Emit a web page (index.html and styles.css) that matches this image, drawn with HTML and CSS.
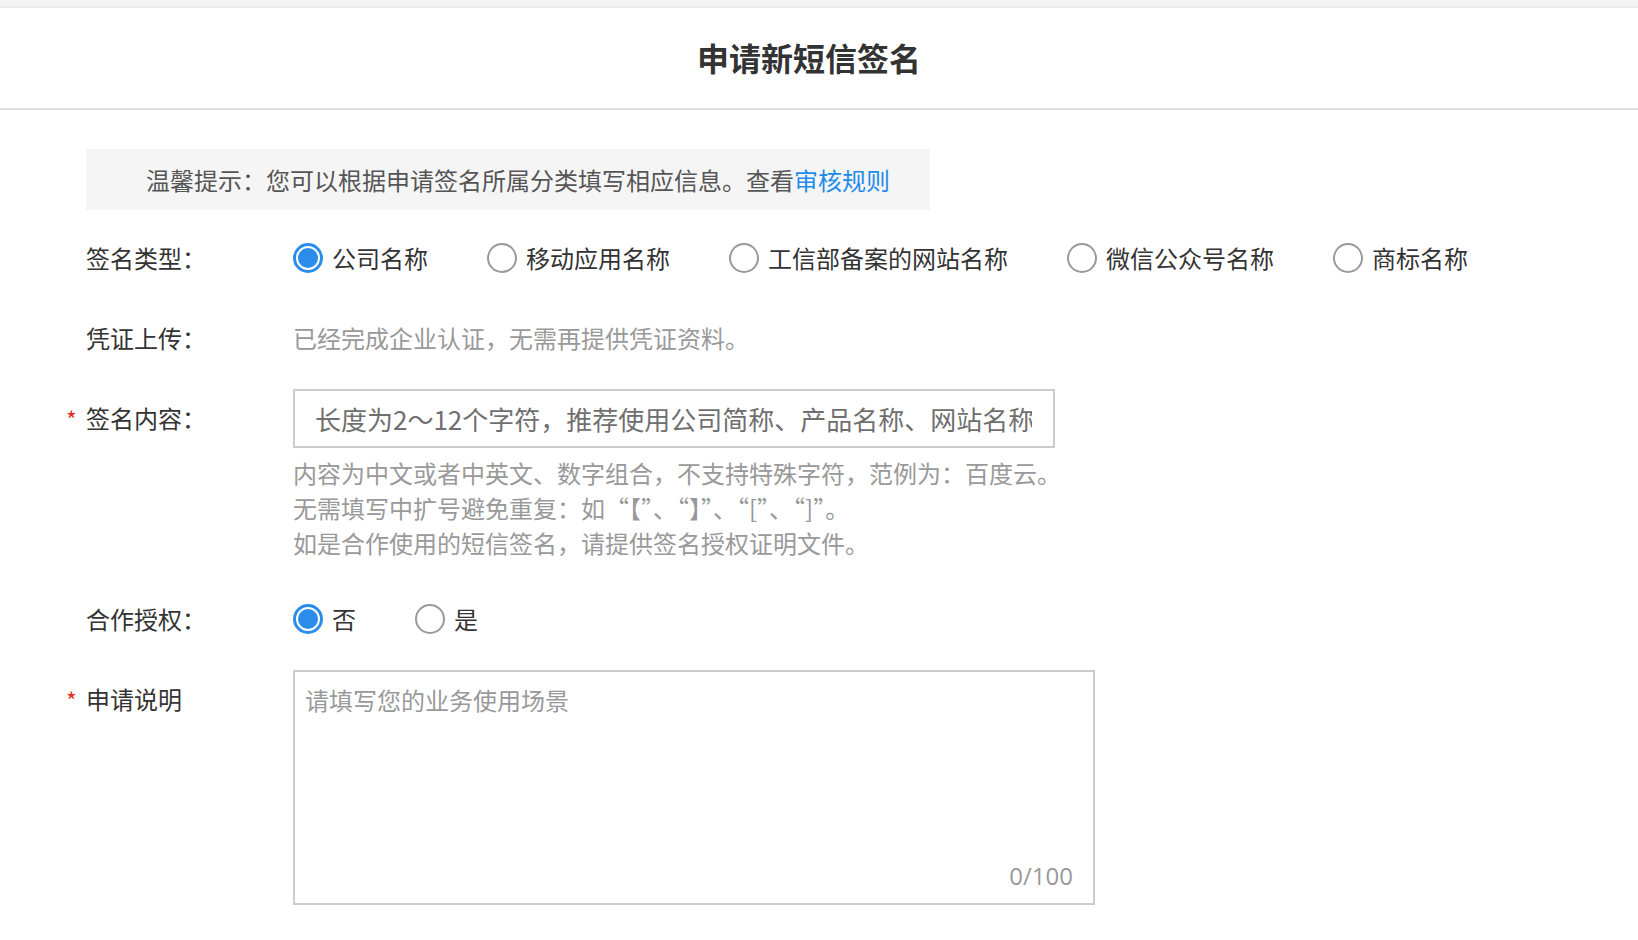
FILE: index.html
```html
<!DOCTYPE html>
<html lang="zh-CN">
<head>
    <meta charset="UTF-8">
    <meta name="viewport" content="width=device-width, initial-scale=1.0">
    <title>申请新短信签名</title>
    <link rel="stylesheet" href="styles.css">
</head>
<body>

    <div class="topbar"></div>

    <!-- 标题 -->
    <div class="header">
        <h1>申请新短信签名</h1>
    </div>

    <div class="form-container">
        <div class="tip">温馨提示：您可以根据申请签名所属分类填写相应信息。查看<a href="#">审核规则</a></div>

        <div class="row row-type">
            <div class="label">签名类型：</div>
            <div class="radios">
                <label class="radio"><input type="radio" name="type" checked><span>公司名称</span></label>
                <label class="radio"><input type="radio" name="type"><span>移动应用名称</span></label>
                <label class="radio"><input type="radio" name="type"><span>工信部备案的网站名称</span></label>
                <label class="radio"><input type="radio" name="type"><span>微信公众号名称</span></label>
                <label class="radio"><input type="radio" name="type"><span>商标名称</span></label>
            </div>
        </div>

        <div class="row row-proof">
            <div class="label">凭证上传：</div>
            <div class="value">已经完成企业认证，无需再提供凭证资料。</div>
        </div>

        <div class="row row-content">
            <div class="label required">签名内容：</div>
            <div class="field">
                <div class="input-wrap">
                    <input type="text" class="text-input" placeholder="长度为2～12个字符，推荐使用公司简称、产品名称、网站名称等">
                </div>
                <div class="hints">
                    <p>内容为中文或者中英文、数字组合，不支持特殊字符，范例为：百度云。</p>
                    <p>无需填写中扩号避免重复：如“【”、“】”、“[”、“]”。</p>
                    <p>如是合作使用的短信签名，请提供签名授权证明文件。</p>
                </div>
            </div>
        </div>

        <div class="row row-auth">
            <div class="label">合作授权：</div>
            <div class="radios">
                <label class="radio"><input type="radio" name="auth" checked><span>否</span></label>
                <label class="radio"><input type="radio" name="auth"><span>是</span></label>
            </div>
        </div>

        <div class="row row-desc">
            <div class="label required">申请说明</div>
            <div class="textarea-wrap">
                <textarea placeholder="请填写您的业务使用场景"></textarea>
                <span class="count">0/100</span>
            </div>
        </div>
    </div>

</body>
</html>
```

FILE: styles.css
```css
body {
    margin: 0;
    font-family: "Noto Sans CJK SC", "Noto Sans", sans-serif;
    color: #333;
    background-color: #fff;
}
.topbar {
    height: 6px;
    background-color: #f4f4f4;
    border-bottom: 2px solid #e9ecef;
}
.header {
    height: 102px;
    padding: 0 20px 2px 0;
    box-sizing: border-box;
    border-bottom: 2px solid #ddd;
    display: flex;
    align-items: center;
    justify-content: center;
}
.header h1 {
    margin: 0;
    font-size: 32px;
    font-weight: bold;
    color: #333;
}
.form-container {
    padding: 39px 0 0 86px;
}
.tip {
    width: 784px;
    height: 61px;
    padding-left: 60px;
    background-color: #f5f5f5;
    font-size: 24px;
    line-height: 61px;
    color: #555;
}
.tip a {
    color: #1f8ceb;
    text-decoration: none;
}
.row {
    display: flex;
    align-items: flex-start;
}
.label {
    position: relative;
    width: 207px;
    flex-shrink: 0;
    font-size: 24px;
    line-height: 36px;
    color: #333;
}
.required::before {
    content: "*";
    position: absolute;
    left: -20px;
    top: 1px;
    color: #e02e24;
    font-size: 23px;
}
.row-type {
    margin-top: 30px;
}
.row-proof {
    margin-top: 44px;
}
.row-content {
    margin-top: 33px;
}
.row-auth {
    margin-top: 41px;
}
.row-desc {
    margin-top: 33px;
}
.row-content .label, .row-desc .label {
    line-height: 58px;
}
.radios {
    display: flex;
    gap: 59px;
}
.radio {
    display: flex;
    align-items: center;
    gap: 9px;
    font-size: 24px;
    line-height: 36px;
    color: #333;
    cursor: pointer;
}
.radio input {
    appearance: none;
    -webkit-appearance: none;
    margin: 0;
    width: 30px;
    height: 30px;
    border: 2px solid #999;
    border-radius: 50%;
    box-sizing: border-box;
    position: relative;
}
.radio input:checked {
    border: 3px solid #2a8ceb;
}
.radio input:checked::after {
    content: "";
    position: absolute;
    left: 2px;
    top: 2px;
    width: 20px;
    height: 20px;
    border-radius: 50%;
    background-color: #2a8ceb;
}
.value {
    font-size: 24px;
    line-height: 36px;
    color: #999;
}
.input-wrap {
    width: 762px;
    height: 59px;
    border: 2px solid #ccc;
    box-sizing: border-box;
}
.text-input {
    width: 100%;
    height: 100%;
    box-sizing: border-box;
    border: none;
    outline: none;
    padding: 0 21px 0 20px;
    font-family: inherit;
    font-size: 26px;
    color: #333;
    background: transparent;
}
.text-input::placeholder {
    color: #6f6f6f;
}
.hints {
    margin-top: 7px;
}
.hints p {
    margin: 0;
    font-size: 24px;
    line-height: 35px;
    color: #999;
}
.textarea-wrap {
    position: relative;
    width: 802px;
    height: 235px;
}
.textarea-wrap textarea {
    width: 100%;
    height: 100%;
    box-sizing: border-box;
    border: 2px solid #ccc;
    outline: none;
    resize: none;
    padding: 10px 10px;
    font-family: inherit;
    font-size: 24px;
    line-height: 36px;
    color: #333;
}
.textarea-wrap textarea::placeholder {
    color: #999;
}
.count {
    position: absolute;
    right: 22px;
    bottom: 11px;
    font-family: "Open Sans", "Noto Sans", sans-serif;
    font-size: 24px;
    line-height: 36px;
    color: #999;
}
```
